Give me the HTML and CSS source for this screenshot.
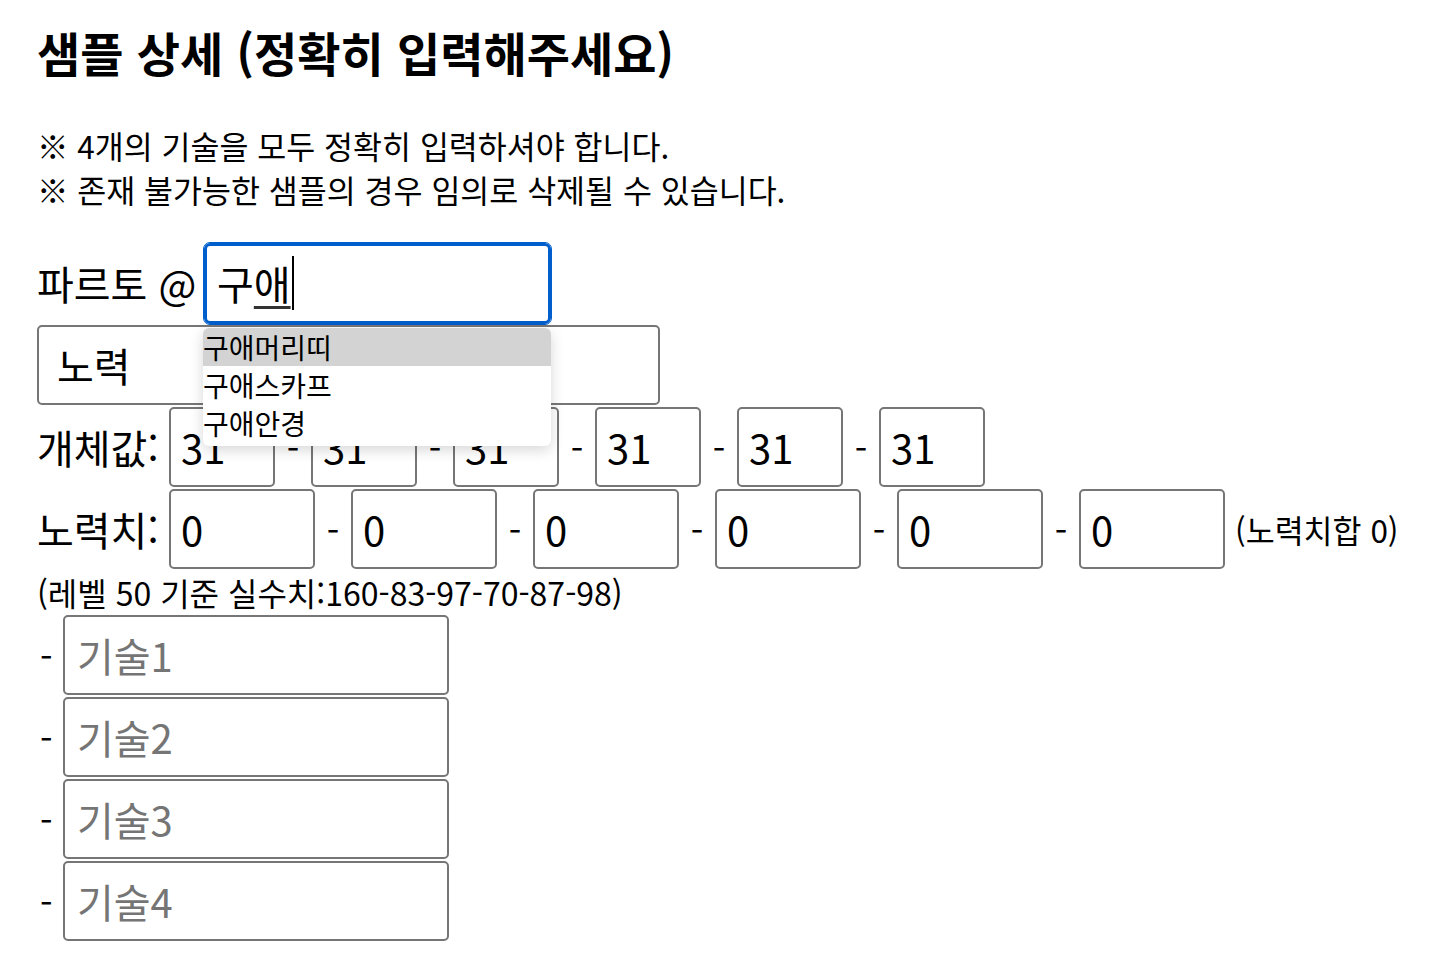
FILE: index.html
```html
<!DOCTYPE html>
<html lang="ko">
<head>
    <meta charset="UTF-8" />
    <meta name="viewport" content="width=device-width, initial-scale=1" />
    <title>샘플 상세</title>
    <link rel="stylesheet" href="styles.css">
</head>
<body>
    <div class="page">
        <h1 class="title">샘플 상세 (정확히 입력해주세요)</h1>
        <p class="notice">※ 4개의 기술을 모두 정확히 입력하셔야 합니다.<br>※ 존재 불가능한 샘플의 경우 임의로 삭제될 수 있습니다.</p>

        <div class="sample-form">
            <div class="row">
                <span class="label label-part">파르토 @</span>
                <div class="combo">
                    <div class="field field-focus" role="textbox">구<span class="composing">애</span><span class="caret"></span></div>
                    <ul class="suggest">
                        <li class="active">구애머리띠</li>
                        <li>구애스카프</li>
                        <li>구애안경</li>
                    </ul>
                </div>
            </div>

            <div class="row">
                <input class="field field-wide" type="text" value="노력" />
            </div>

            <div class="row">
                <span class="label label-stat">개체값:</span>
                <input class="field field-iv" type="text" value="31" />
                <span class="dash">-</span>
                <input class="field field-iv" type="text" value="31" />
                <span class="dash">-</span>
                <input class="field field-iv" type="text" value="31" />
                <span class="dash">-</span>
                <input class="field field-iv" type="text" value="31" />
                <span class="dash">-</span>
                <input class="field field-iv" type="text" value="31" />
                <span class="dash">-</span>
                <input class="field field-iv" type="text" value="31" />
            </div>

            <div class="row">
                <span class="label label-stat">노력치:</span>
                <input class="field field-ev" type="text" value="0" />
                <span class="dash">-</span>
                <input class="field field-ev" type="text" value="0" />
                <span class="dash">-</span>
                <input class="field field-ev" type="text" value="0" />
                <span class="dash">-</span>
                <input class="field field-ev" type="text" value="0" />
                <span class="dash">-</span>
                <input class="field field-ev" type="text" value="0" />
                <span class="dash">-</span>
                <input class="field field-ev" type="text" value="0" />
                <span class="ev-sum">(노력치합 0)</span>
            </div>

            <p class="stat-line">(레벨 50 기준 실수치:160-83-97-70-87-98)</p>

            <div class="row">
                <span class="skill-dash">-</span>
                <input class="field field-skill" type="text" placeholder="기술1" />
            </div>
            <div class="row">
                <span class="skill-dash">-</span>
                <input class="field field-skill" type="text" placeholder="기술2" />
            </div>
            <div class="row">
                <span class="skill-dash">-</span>
                <input class="field field-skill" type="text" placeholder="기술3" />
            </div>
            <div class="row">
                <span class="skill-dash">-</span>
                <input class="field field-skill" type="text" placeholder="기술4" />
            </div>
        </div>
    </div>
</body>
</html>
```

FILE: styles.css
```css
body {
    margin: 0;
    background: #fff;
    color: #000;
    font-family: "Noto Sans CJK KR", "Noto Sans", sans-serif;
}
.page {
    padding: 22px 0 0 37px;
}
.title {
    margin: 0;
    font-size: 47px;
    line-height: 60px;
    font-weight: 700;
}
.notice {
    margin: 41px 0 0 0;
    font-size: 31.5px;
    line-height: 44px;
}
.sample-form {
    margin-top: 32px;
    display: flex;
    flex-direction: column;
    gap: 2px;
}
.row {
    display: flex;
    align-items: center;
    height: 80px;
}
.label {
    font-size: 40px;
    white-space: nowrap;
}
.label-part {
    width: 167px;
}
.label-stat {
    width: 132px;
}
.field {
    box-sizing: border-box;
    height: 80px;
    border: 2px solid #767676;
    border-radius: 5px;
    background: #fff;
    font-family: "Noto Sans CJK KR", "Noto Sans", sans-serif;
    font-size: 40px;
    color: #000;
    padding: 0 10px;
    margin: 0;
    outline: none;
}
.field::placeholder {
    color: #757575;
}
.combo {
    position: relative;
}
.field-focus {
    width: 347px;
    height: 81px;
    border: 3px solid #005fcc;
    outline: 1px solid #005fcc;
    border-radius: 6px;
    display: flex;
    align-items: center;
    padding-left: 10px;
}
.composing {
    text-decoration: underline;
    text-decoration-thickness: 3px;
    text-underline-offset: 6px;
    text-decoration-color: #333;
}
.caret {
    display: inline-block;
    width: 2px;
    height: 54px;
    margin-left: 1px;
    background: #000;
}
.suggest {
    position: absolute;
    top: 85px;
    left: -1px;
    width: 348px;
    margin: 0;
    padding: 0 0 4px 0;
    list-style: none;
    background: #fff;
    border-radius: 6px;
    box-shadow: 0 4px 14px rgba(0,0,0,0.16);
    z-index: 5;
    overflow: hidden;
}
.suggest li {
    height: 38px;
    line-height: 38px;
    font-size: 28px;
}
.suggest li.active {
    background: #d3d3d3;
}
.field-wide {
    width: 623px;
    padding-left: 18px;
}
.field-iv {
    width: 106px;
}
.field-ev {
    width: 146px;
}
.dash {
    width: 36px;
    text-align: center;
    font-size: 36px;
}
.ev-sum {
    margin-left: 10px;
    font-size: 31.5px;
    white-space: nowrap;
}
.stat-line {
    margin: 0;
    height: 42px;
    line-height: 42px;
    font-size: 32px;
}
.skill-dash {
    width: 23px;
    font-size: 36px;
    padding-left: 3px;
}
.field-skill {
    width: 386px;
    padding-left: 12px;
}
```
